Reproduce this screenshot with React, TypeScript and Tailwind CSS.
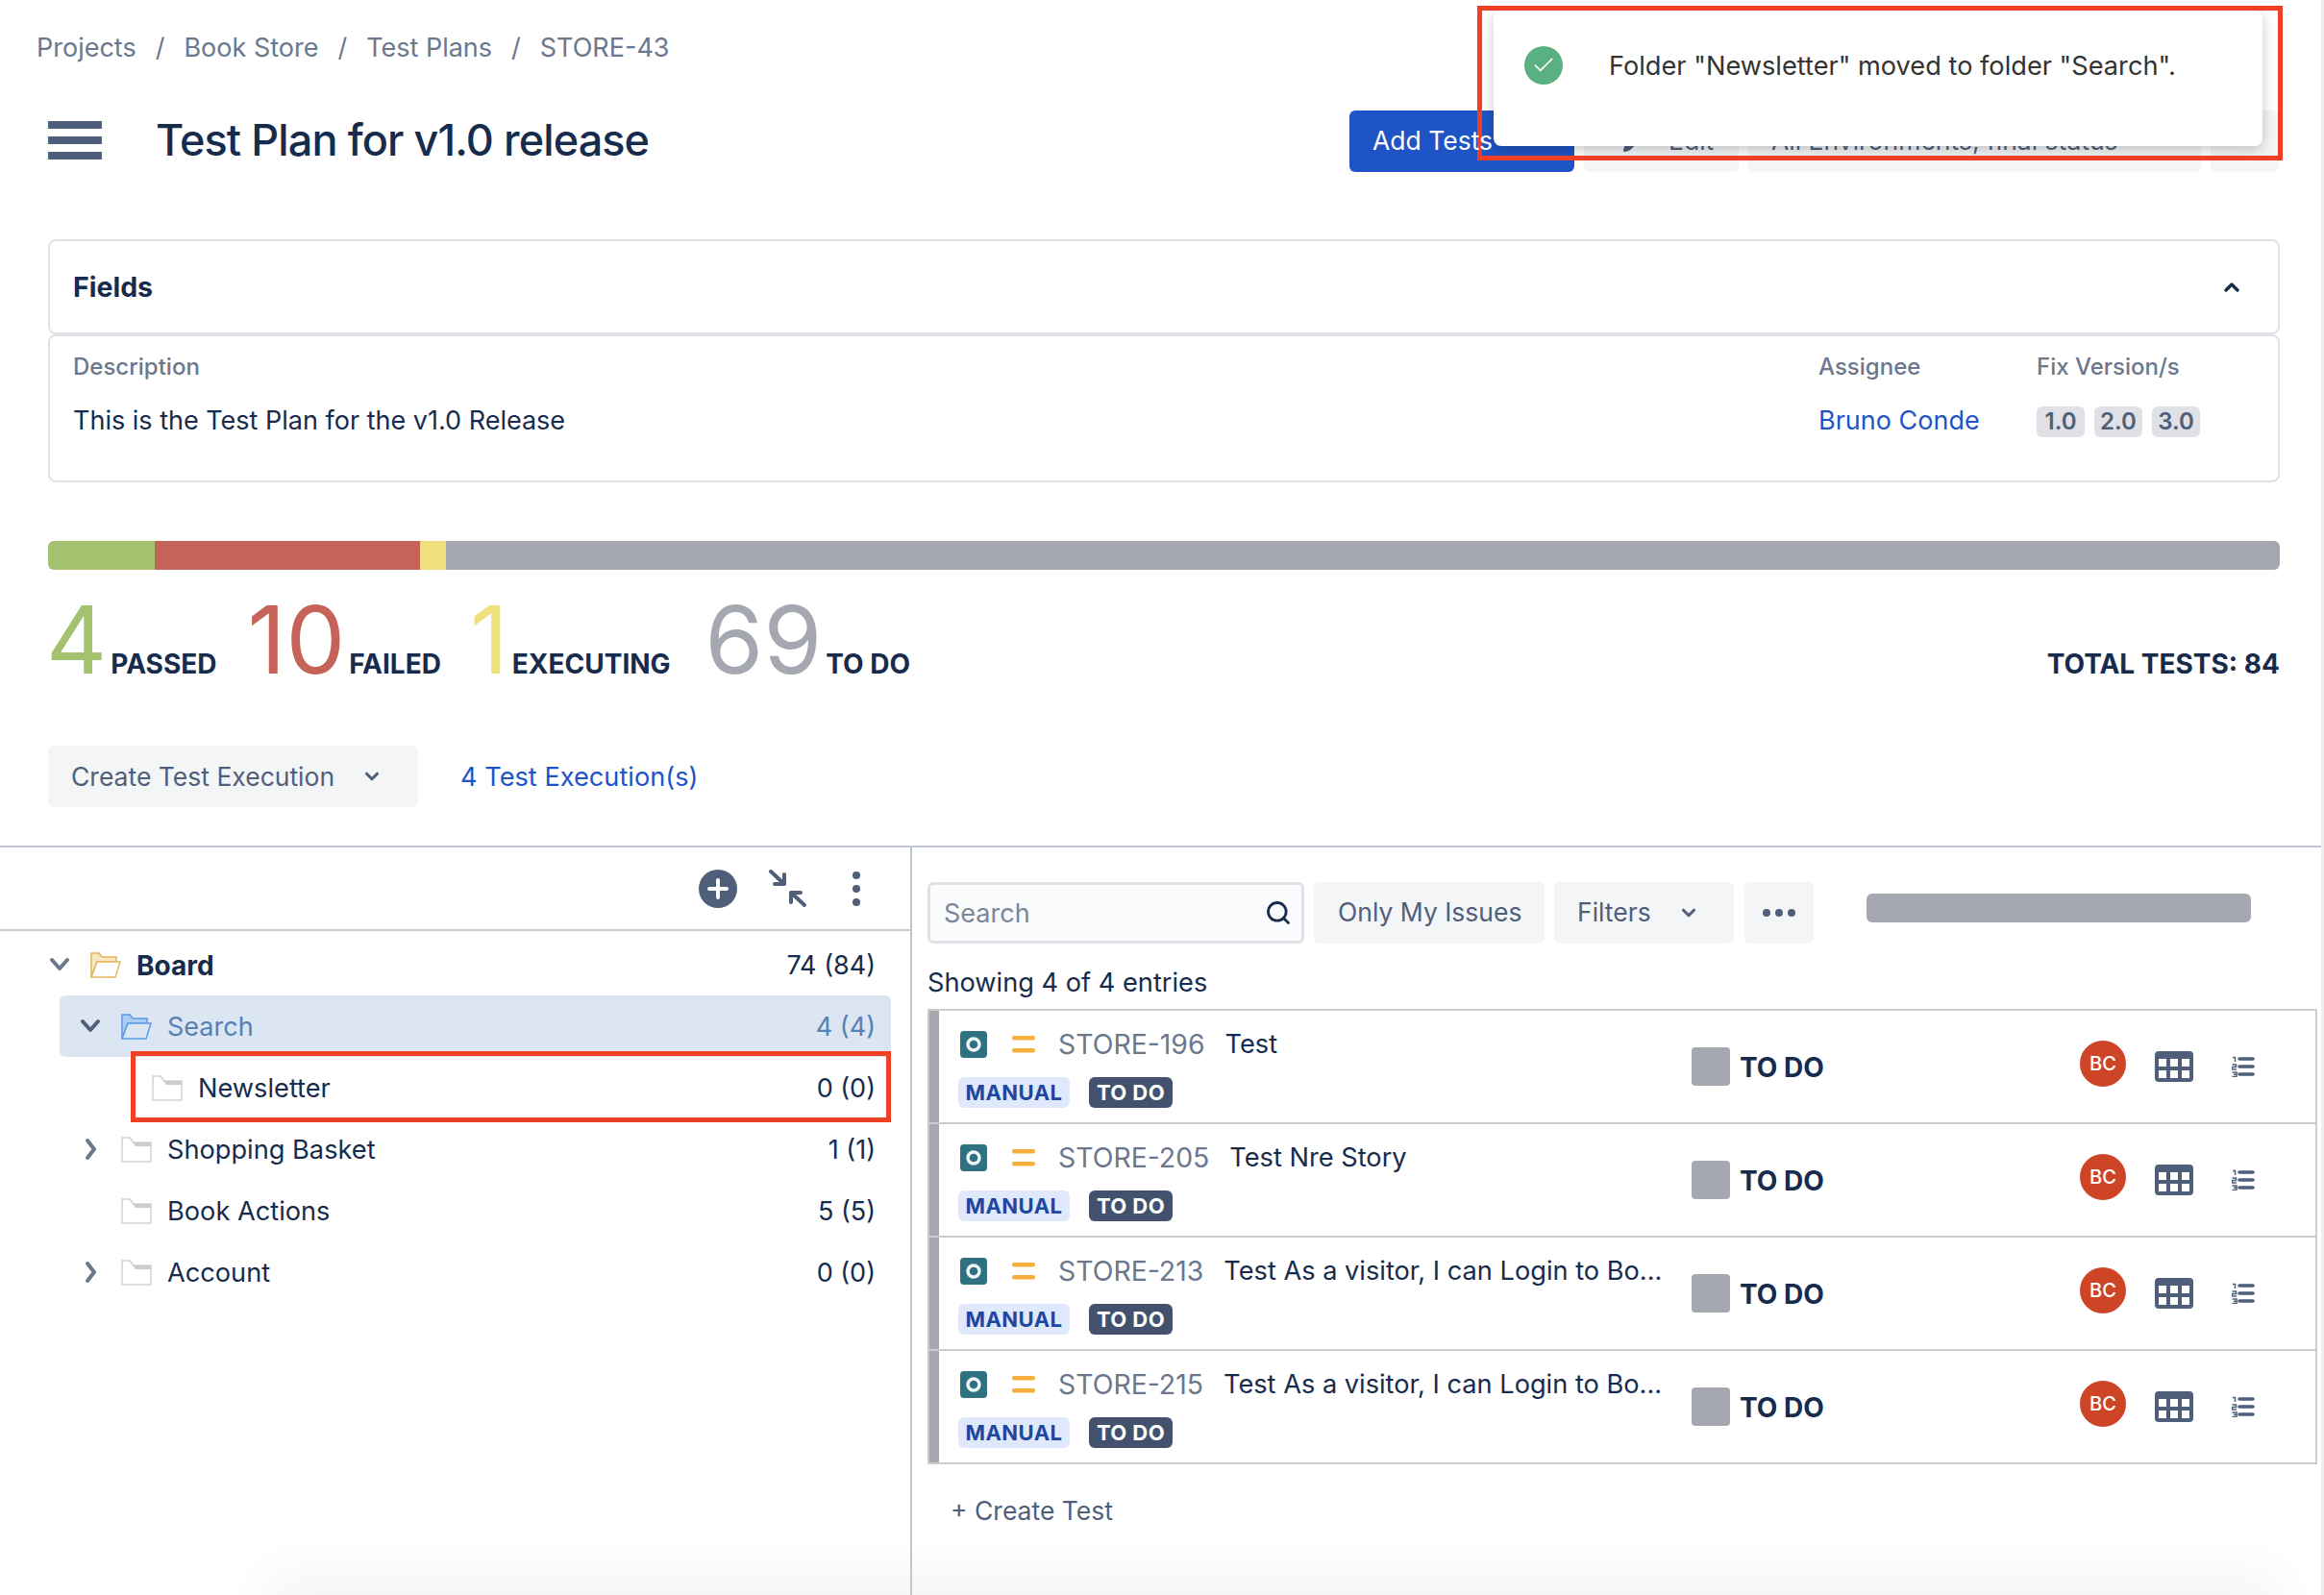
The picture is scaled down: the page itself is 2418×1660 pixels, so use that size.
import React from "react";
import { Check, ChevronDown, ChevronUp, Pencil, Search } from "lucide-react";

const FolderOpen: React.FC<{ active?: boolean }> = ({ active }) => {
  const stroke = active ? "#5a9be8" : "#e6b45e";
  const back = active ? "#a9cdf5" : "#fbe6c2";
  const front = active ? "#dce6f2" : "#ffffff";
  return (
    <svg width="32" height="27" viewBox="0 0 32 27" fill="none" className="shrink-0">
      <path d="M1 26V1h8l3 4h15v5H7L1 26Z" fill={back} stroke={stroke} strokeWidth="1.5" />
      <path d="M7 10h24l-5 16H1l6-16Z" fill={front} stroke={stroke} strokeWidth="1.5" />
    </svg>
  );
};

const FolderEmpty = () => (
  <svg width="32" height="27" viewBox="0 0 32 27" fill="none" className="shrink-0">
    <path d="M1 1h8l4 5h18v20H1V1Z" fill="#ffffff" stroke="#d4d4d4" strokeWidth="1.5" />
    <path d="M10 3l4 3h17v4H15l-5-7Z" fill="#cccccc" />
  </svg>
);

const TreeChevron: React.FC<{ open?: boolean; dark?: boolean }> = ({ open, dark }) =>
  open ? (
    <svg width="24" height="16" viewBox="0 0 24 16" fill="none" className="shrink-0">
      <path d="M4 3l8 9 8-9" stroke={dark ? "#505f79" : "#6b778c"} strokeWidth="4" strokeLinecap="round" strokeLinejoin="round" />
    </svg>
  ) : (
    <svg width="24" height="24" viewBox="0 0 24 24" fill="none" className="shrink-0">
      <path d="M9 3l7 9-7 9" stroke="#6b778c" strokeWidth="4" strokeLinecap="round" strokeLinejoin="round" />
    </svg>
  );

const IssueIcon = () => (
  <svg width="28" height="28" viewBox="0 0 28 28" className="shrink-0">
    <rect width="28" height="28" rx="4" fill="#2e7180" />
    <circle cx="14" cy="14" r="6" fill="none" stroke="#f2f7f8" strokeWidth="3.4" />
  </svg>
);

const PriorityIcon = () => (
  <svg width="24" height="18" viewBox="0 0 24 18" className="shrink-0">
    <rect y="0" width="24" height="4.5" rx="2" fill="#f7ae3d" />
    <rect y="13" width="24" height="4.5" rx="2" fill="#f7ae3d" />
  </svg>
);

const GridIcon = () => (
  <svg width="40" height="32" viewBox="0 0 40 32" className="shrink-0">
    <rect width="40" height="32" rx="4" fill="#505f79" />
    {[4, 16, 28].map((x) =>
      [8, 20].map((y) => <rect key={`${x}-${y}`} x={x} y={y} width="8" height="8" fill="#ffffff" />)
    )}
  </svg>
);

const NumberedIcon = () => (
  <svg width="24" height="22" viewBox="0 0 24 22" fill="none" className="shrink-0">
    <path d="M8 3h14M8 11h14M8 19h14" stroke="#505f79" strokeWidth="3.6" strokeLinecap="round" />
    <path d="M1 1.5h2.5V6M0.5 9h4v2.5h-4V14h4.5M0.5 17h4.5v4.5H0.5M2 19.2h3" stroke="#505f79" strokeWidth="1.5" />
  </svg>
);

const CollapseIcon = () => (
  <svg width="40" height="40" viewBox="0 0 40 40" fill="none">
    <path d="M2 2l14 13M16 5v10H6M37 37L23 24M23 34V24h10" stroke="#505f79" strokeWidth="4" strokeLinejoin="round" strokeLinecap="round" />
  </svg>
);

const tree = [
  { name: "Newsletter", count: "0 (0)", rowCls: "pl-[158px]" },
  { name: "Shopping Basket", count: "1 (1)", rowCls: "pl-[82px]", chevron: true },
  { name: "Book Actions", count: "5 (5)", rowCls: "pl-[126px]" },
  { name: "Account", count: "0 (0)", rowCls: "pl-[82px]", chevron: true },
];

const issues = [
  { key: "STORE-196", title: "Test" },
  { key: "STORE-205", title: "Test Nre Story" },
  { key: "STORE-213", title: "Test As a visitor, I can Login to Bo..." },
  { key: "STORE-215", title: "Test As a visitor, I can Login to Bo..." },
];

const stats = [
  { num: "4", label: "PASSED", numCls: "text-[#a3c16f] -ml-[2px]", wrapCls: "" },
  { num: "10", label: "FAILED", numCls: "text-[#c66358]", wrapCls: "ml-[32px]" },
  { num: "1", label: "EXECUTING", numCls: "text-[#eee07c]", wrapCls: "ml-[30px]" },
  { num: "69", label: "TO DO", numCls: "text-[#a5a8b0]", wrapCls: "ml-[36px]" },
];

export default function App() {
  return (
    <div className="relative w-[2418px] h-[1660px] overflow-hidden bg-white font-['Inter',sans-serif] text-[27px] text-[#172b4d]">
      {/* header */}
      <nav className="h-[115px] pl-[38px] pt-[33px] flex items-start gap-[20px] leading-[34px] text-[#6b778c]">
        <span>Projects</span>
        <span>/</span>
        <span>Book Store</span>
        <span>/</span>
        <span>Test Plans</span>
        <span>/</span>
        <span>STORE-43</span>
      </nav>

      <header className="h-[64px] pl-[50px] pr-[47px] flex items-center">
        <div className="-mt-[2px] w-[56px] flex flex-col gap-[8px]">
          <div className="h-[8px] bg-[#505f79]" />
          <div className="h-[8px] bg-[#505f79]" />
          <div className="h-[8px] bg-[#505f79]" />
        </div>
        <h1 className="ml-[56px] mb-[3px] text-[45px] font-medium tracking-[-0.02em]">Test Plan for v1.0 release</h1>
        <div className="ml-auto flex gap-[10px] h-[64px] text-[26.5px]">
          <div className="w-[234px] rounded-md bg-[#1e54c6] text-white flex items-center pl-[24px] gap-[40px]">
            <span className="relative z-30">Add Tests</span>
            <ChevronDown size={22} strokeWidth={3} />
          </div>
          <div className="w-[161px] rounded-md bg-[#f4f5f7] text-[#505f79] flex items-center pl-[40px] gap-[24px]">
            <Pencil size={24} fill="#505f79" />
            Edit
          </div>
          <div className="w-[471px] rounded-md bg-[#f4f5f7] text-[#505f79] flex items-center pl-[24px] gap-[30px]">
            All Environments, final status
            <ChevronDown size={22} strokeWidth={3} />
          </div>
          <div className="w-[71px] rounded-md bg-[#f4f5f7]" />
        </div>
      </header>

      {/* fields */}
      <section className="mt-[70px] mx-[50px] w-[2322px]">
        <div className="h-[99px] rounded-lg border-2 border-[#dfe1e6] pl-[24px] pr-[36px] flex items-center justify-between">
          <span className="pt-[2px] text-[28.5px] font-bold">Fields</span>
          <ChevronUp size={24} strokeWidth={3.4} />
        </div>
        <div className="h-[154px] rounded-lg border-2 border-[#dfe1e6] pl-[24px] flex">
          <div className="w-[1816px] pt-[17px]">
            <div className="text-[24px] font-medium leading-[30px] text-[#6b778c]">Description</div>
            <div className="mt-[24px] leading-[34px]">This is the Test Plan for the v1.0 Release</div>
          </div>
          <div className="w-[227px] pt-[17px]">
            <div className="text-[24px] font-medium leading-[30px] text-[#6b778c]">Assignee</div>
            <div className="mt-[24px] leading-[34px] text-[#1f54c7]">Bruno Conde</div>
          </div>
          <div className="pt-[17px]">
            <div className="text-[24px] font-medium leading-[30px] text-[#6b778c]">Fix Version/s</div>
            <div className="mt-[26px] flex gap-[10px]">
              {["1.0", "2.0", "3.0"].map((v) => (
                <span key={v} className="w-[50px] h-[32px] rounded-md bg-[#dfe1e6] text-[#505f79] text-[24px] font-semibold flex items-center justify-center">
                  {v}
                </span>
              ))}
            </div>
          </div>
        </div>
      </section>

      {/* progress */}
      <div className="mt-[61px] mx-[50px] w-[2322px] h-[30px] rounded-md overflow-hidden flex">
        <div className="w-[111px] bg-[#a3c16f]" />
        <div className="w-[276px] bg-[#c66358]" />
        <div className="w-[27px] bg-[#eee07c]" />
        <div className="flex-1 bg-[#a5a8b0]" />
      </div>

      <div className="mt-[24px] mx-[50px] w-[2322px] flex items-baseline">
        {stats.map((s) => (
          <div key={s.label} className={`flex items-baseline ${s.wrapCls}`}>
            <span className={`text-[98px] leading-[98px] font-normal ${s.numCls}`}>{s.num}</span>
            <span className="ml-[4px] text-[28px] font-bold">{s.label}</span>
          </div>
        ))}
        <span className="ml-auto mb-[3px] text-[28px] font-bold">TOTAL TESTS: 84</span>
      </div>

      <div className="mt-[61px] ml-[50px] flex items-center">
        <div className="w-[385px] h-[64px] rounded-md bg-[#f4f5f7] text-[#505f79] text-[26.5px] flex items-center pl-[24px] gap-[28px]">
          <span className="pt-[1px]">Create Test Execution</span>
          <ChevronDown size={22} strokeWidth={3.4} />
        </div>
        <span className="ml-[44px] pt-[2px] text-[27.2px] text-[#1f54c7]">4 Test Execution(s)</span>
      </div>

      {/* soft shade along the bottom edge of the page */}
      <div className="absolute left-[300px] right-[70px] -bottom-[30px] h-[30px] bg-[#e4e4e4] shadow-[0_0_50px_24px_rgba(0,0,0,0.045)]" />

      {/* split */}
      <div className="relative mt-[40px] h-[780px] border-t-2 border-[#c1c7d0] flex">
        <aside className="w-[949px] border-r-2 border-[#c1c7d0]">
          <div className="h-[87px] border-b-2 border-[#cccccc] flex items-center justify-end pr-[52px]">
            <div className="w-[40px] h-[40px] rounded-full bg-[#505f79] flex items-center justify-center">
              <svg width="22" height="22" viewBox="0 0 22 22" fill="none">
                <path d="M11 2v18M2 11h18" stroke="#ffffff" strokeWidth="4" strokeLinecap="round" />
              </svg>
            </div>
            <div className="ml-[33px]">
              <CollapseIcon />
            </div>
            <div className="ml-[47px] flex flex-col gap-[6px]">
              <div className="w-[8px] h-[8px] rounded-full bg-[#505f79]" />
              <div className="w-[8px] h-[8px] rounded-full bg-[#505f79]" />
              <div className="w-[8px] h-[8px] rounded-full bg-[#505f79]" />
            </div>
          </div>
          <div className="pt-[3px]">
            <div className="h-[64px] mr-[20px] pr-[16px] pl-[50px] flex items-center">
              <TreeChevron open />
              <div className="ml-[20px]">
                <FolderOpen />
              </div>
              <span className="ml-[16px] pt-[2px] text-[28px] font-bold">Board</span>
              <span className="ml-auto pt-[2px]">74 (84)</span>
            </div>
            <div className="h-[64px] ml-[62px] mr-[20px] pr-[16px] pl-[20px] rounded-md bg-[#dce6f2] text-[#5581b7] flex items-center">
              <TreeChevron open dark />
              <div className="ml-[20px]">
                <FolderOpen active />
              </div>
              <span className="ml-[16px] pt-[2px]">Search</span>
              <span className="ml-auto pt-[2px]">4 (4)</span>
            </div>
            {tree.map((t) => (
              <div key={t.name} className={`h-[64px] mr-[20px] pr-[16px] flex items-center ${t.rowCls}`}>
                {t.chevron && (
                  <div className="mr-[20px]">
                    <TreeChevron />
                  </div>
                )}
                <FolderEmpty />
                <span className="ml-[16px] pt-[2px] text-[27.2px]">{t.name}</span>
                <span className="ml-auto pt-[2px]">{t.count}</span>
              </div>
            ))}
          </div>
        </aside>

        <main className="flex-1 pl-[16px]">
          <div className="mt-[36px] h-[64px] flex items-center text-[#505f79] text-[26.5px]">
            <div className="w-[392px] h-[64px] rounded-md border-[3px] border-[#dfe1e6] bg-[#fafbfc] pl-[14px] pr-[10px] flex items-center justify-between">
              <span className="pt-[2px] text-[27px] text-[#7a869a]">Search</span>
              <Search size={28} strokeWidth={2.4} className="text-[#172b4d]" />
            </div>
            <div className="ml-[10px] w-[240px] h-[64px] rounded-md bg-[#f4f5f7] flex items-center pl-[25px]">Only My Issues</div>
            <div className="ml-[10px] w-[187px] h-[64px] rounded-md bg-[#f4f5f7] flex items-center pl-[24px] gap-[28px]">
              Filters
              <ChevronDown size={22} strokeWidth={3.4} />
            </div>
            <div className="ml-[11px] w-[72px] h-[64px] rounded-md bg-[#f4f5f7] flex items-center justify-center gap-[5px]">
              <div className="w-[8px] h-[8px] rounded-full bg-[#505f79]" />
              <div className="w-[8px] h-[8px] rounded-full bg-[#505f79]" />
              <div className="w-[8px] h-[8px] rounded-full bg-[#505f79]" />
            </div>
            <div className="ml-[55px] mb-[10px] w-[400px] h-[30px] rounded-md bg-[#a5a8b0]" />
          </div>

          <div className="mt-[21px] h-[40px] leading-[40px] text-[27.2px]">Showing 4 of 4 entries</div>

          <div className="mt-[7px] w-[1446px] border-b-2 border-[#cccccc]">
            {issues.map((issue) => (
              <div key={issue.key} className="h-[118px] border-t-2 border-x-2 border-[#cccccc] flex">
                <div className="w-[10px] bg-[#a5a8b0]" />
                <div className="w-[783px] pt-[21px] pl-[20px]">
                  <div className="h-[28px] pl-[2px] flex items-center">
                    <IssueIcon />
                    <div className="ml-[26px]">
                      <PriorityIcon />
                    </div>
                    <span className="ml-[24px] text-[28.4px] text-[#6b778c]">{issue.key}</span>
                    <span className="ml-[21px] text-[27.2px]">{issue.title}</span>
                  </div>
                  <div className="mt-[20px] flex gap-[20px] text-[22px] font-bold tracking-[0.02em]">
                    <span className="w-[116px] h-[32px] rounded-md bg-[#dfe9fb] text-[#1d47a0] flex items-center justify-center">MANUAL</span>
                    <span className="w-[87px] h-[32px] rounded-md bg-[#42526e] text-white flex items-center justify-center">TO DO</span>
                  </div>
                </div>
                <div className="w-[404px] flex items-center">
                  <div className="w-[40px] h-[40px] rounded bg-[#a5a8b0]" />
                  <span className="ml-[10px] pt-[2px] text-[28px] font-bold">TO DO</span>
                </div>
                <div className="flex items-center">
                  <div className="mb-[6px] w-[48px] h-[48px] rounded-full bg-[#cd4526] text-white text-[20px] font-medium flex items-center justify-center">BC</div>
                  <div className="ml-[30px]">
                    <GridIcon />
                  </div>
                  <div className="ml-[40px]">
                    <NumberedIcon />
                  </div>
                </div>
              </div>
            ))}
          </div>

          <div className="mt-[28px] pl-[24px] leading-[40px] text-[26.5px] text-[#505f79]">+ Create Test</div>
        </main>
      </div>

      {/* toast and annotation boxes */}
      <div className="absolute left-[1554px] top-[11px] w-[800px] h-[141px] rounded-lg bg-white shadow-[0_4px_14px_rgba(0,0,0,0.22)] pl-[32px] pt-[37px] flex items-start gap-[48px]">
        <div className="w-[40px] h-[40px] rounded-full bg-[#5bb081] flex items-center justify-center text-white">
          <Check size={26} strokeWidth={1.6} />
        </div>
        <span className="pt-[1px] leading-[40px] text-[27.2px] text-[#333333]">Folder "Newsletter" moved to folder "Search".</span>
      </div>
      <div className="absolute left-[1537px] top-[6px] w-[838px] h-[161px] border-[5px] border-[#ef4023]" />
      <div className="absolute left-[136px] top-[1094px] w-[791px] h-[74px] border-[5px] border-[#ef4023]" />
      <div className="absolute right-0 top-0 w-[3px] h-[1660px] bg-[#eeeeee]" />
    </div>
  );
}
